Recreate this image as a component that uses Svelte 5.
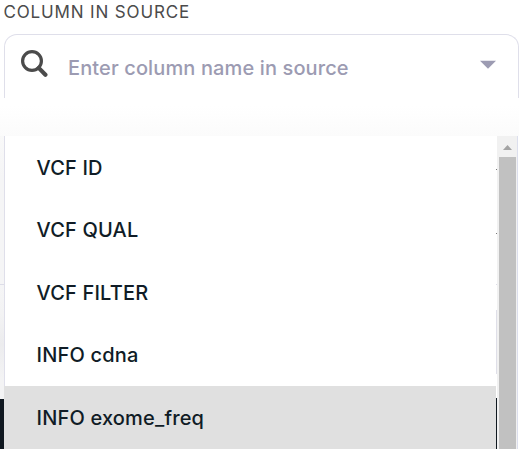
<script>
  const options = ['VCF ID', 'VCF QUAL', 'VCF FILTER', 'INFO cdna', 'INFO exome_freq'];
  let active = $state(4);
  let query = $state('');
</script>

<div class="page">
  <label class="label" for="source"><span>COLUMN IN SOURCE</span></label>

  <div class="field">
    <svg class="search" width="28" height="29" viewBox="0 0 28 29" aria-hidden="true">
      <circle cx="12" cy="12" r="9.4" fill="none" stroke="#4b4b4b" stroke-width="3.2" />
      <path d="M18.7 18.9L25.4 25.7" fill="none" stroke="#4b4b4b" stroke-width="4.2" stroke-linecap="round" />
    </svg>
    <input id="source" placeholder="Enter column name in source" bind:value={query} />
    <svg class="arrow" width="16" height="9" viewBox="0 0 16 9" aria-hidden="true">
      <path d="M0 .7H16L8 8.7Z" fill="#9c9bb2" />
    </svg>
  </div>

  <div class="gap"></div>

  <div class="dropdown">
    <div class="gutter"></div>
    <ul>
      {#each options as option, i}
        <li class:active={i === active} onmouseenter={() => (active = i)}>{option}</li>
      {/each}
    </ul>
    <div class="edge">
      <i class="white a"></i>
      <i class="dot"></i>
      <i class="white b"></i>
      <i class="dot"></i>
      <i class="white c"></i>
      <i class="dot light"></i>
      <i class="white d"></i>
      <i class="line"></i>
      <i class="white e"></i>
      <i class="dark"></i>
    </div>
    <div class="scrollbar">
      <svg width="21" height="21" viewBox="0 0 21 21" aria-hidden="true">
        <path d="M6 14L10.5 9L15 14Z" fill="#a3a3a3" />
      </svg>
      <div class="thumb"></div>
    </div>
  </div>
</div>

<style>
  :global(body) {
    background: #fff;
    overflow: hidden;
  }
  .page {
    display: flex;
    flex-direction: column;
    width: 519px;
    height: 449px;
    overflow: hidden;
    box-sizing: border-box;
    background: #fff;
    font-family: Inter, 'Liberation Sans', sans-serif;
  }
  .label {
    height: 34px;
    padding-left: 3.5px;
    box-sizing: border-box;
    font-size: 17px;
    line-height: 24px;
    letter-spacing: 0.85px;
    color: #4b4b4b;
    white-space: nowrap;
  }
  .field {
    display: flex;
    align-items: flex-start;
    height: 64px;
    margin-left: 4px;
    padding: 14px 22px 0 15px;
    box-sizing: border-box;
    border: 1px solid #dfdfea;
    border-bottom: 0;
    border-radius: 13px 13px 0 0;
  }
  .search {
    flex: none;
  }
  input {
    flex: 1;
    min-width: 0;
    height: 38px;
    margin: 0 0 0 20px;
    padding: 0;
    border: 0;
    outline: 0;
    background: transparent;
    font: 500 20px/38px Inter, 'Liberation Sans', sans-serif;
    letter-spacing: 0.12px;
    color: #101c26;
  }
  input::placeholder {
    color: #9c9bb2;
    opacity: 1;
  }
  .arrow {
    flex: none;
    margin-top: 11px;
  }
  .gap {
    height: 38px;
    background: linear-gradient(#fff 20%, #fbfbfb);
  }
  .dropdown {
    display: flex;
    height: 313px;
  }
  .gutter {
    width: 4px;
    background: linear-gradient(
      #f9f9f9 0,
      #f5f5f6 40px,
      #f5f5f6 148px,
      #dddde8 148px,
      #dddde8 149px,
      #f5f5f6 149px,
      #f3f3f4 178px,
      #ececee 208px,
      #f3f3f4 242px,
      #f3f3f4 263px,
      #101820 263px
    );
  }
  ul {
    width: 491px;
    margin: 0;
    padding: 0;
    list-style: none;
    border-left: 1px solid #dfdfea;
    background: #fff;
  }
  li {
    height: 62px;
    padding-left: 31.5px;
    font-size: 20px;
    font-weight: 500;
    line-height: 64px;
    letter-spacing: 0.18px;
    color: #101c26;
    white-space: nowrap;
  }
  li:nth-child(even) {
    height: 63px;
  }
  li.active {
    margin-left: -1px;
    padding-left: 32.5px;
    height: 63px;
    background: #e0e0e0;
  }
  .edge {
    display: flex;
    flex-direction: column;
    width: 1px;
  }
  .a { height: 33px; }
  .b { height: 63px; }
  .c { height: 50px; }
  .d { height: 25px; }
  .e { height: 24px; }
  .dot {
    height: 1px;
    background: #777;
  }
  .dot.light {
    background: #dddde8;
  }
  .line {
    height: 64px;
    background: #dfdfe8;
  }
  .dark {
    flex: 1;
    background: #101820;
  }
  .scrollbar {
    display: flex;
    flex-direction: column;
    width: 21px;
    box-sizing: border-box;
    border-right: 1px solid #dcdfed;
    background: #f1f1f1;
  }
  .scrollbar svg {
    flex: none;
    display: block;
  }
  .thumb {
    flex: 1;
    width: 17px;
    margin-left: 2px;
    background: #c1c1c1;
  }
</style>
